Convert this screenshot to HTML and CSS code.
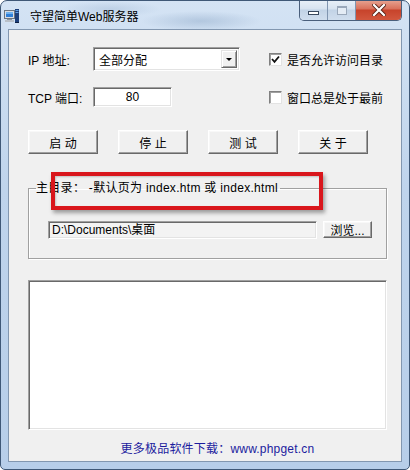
FILE: index.html
```html
<!DOCTYPE html>
<html lang="zh-CN">
<head>
    <meta charset="UTF-8">
    <meta name="viewport" content="width=device-width, initial-scale=1.0">
    <title>守望简单Web服务器</title>
    <link rel="stylesheet" href="styles.css">
</head>
<body>
    <div class="window">
        <div class="titlebar">
            <svg class="app-icon" width="16" height="16" viewBox="0 0 16 16">
                <rect x="0.5" y="2.5" width="10" height="8" fill="#d8dde4" stroke="#6b7480"/>
                <rect x="2" y="4" width="7" height="5" fill="#2f7fd8"/>
                <rect x="2" y="4" width="7" height="2" fill="#6fb2f0"/>
                <rect x="3" y="11" width="5" height="1" fill="#8a929c"/>
                <rect x="1" y="12" width="9" height="2" fill="#b9c0c8"/>
                <rect x="11" y="1" width="4" height="13" fill="#1d3f7a"/>
                <rect x="11.5" y="2" width="3" height="1" fill="#5fa0e8"/>
                <rect x="11.5" y="4" width="3" height="1" fill="#5fa0e8"/>
                <rect x="11" y="14" width="4" height="1" fill="#0c1f40"/>
            </svg>
            <span class="title">守望简单Web服务器</span>
            <div class="caption-buttons">
                <div class="cap-btn cap-min"><span class="min-glyph"></span></div>
                <div class="cap-btn cap-max"><span class="max-glyph"></span></div>
                <div class="cap-btn cap-close">
                    <svg width="14" height="12" viewBox="0 0 14 12">
                        <path d="M2 1 L12 11 M12 1 L2 11" stroke="#5a2418" stroke-width="4" stroke-linecap="square"/>
                        <path d="M2 1 L12 11 M12 1 L2 11" stroke="#ffffff" stroke-width="2.2" stroke-linecap="square"/>
                    </svg>
                </div>
            </div>
        </div>

        <div class="client">
            <div class="settings">
                <span class="field-label">IP 地址:</span>
                <div class="combo">
                    <span class="combo-text">全部分配</span>
                    <span class="combo-arrow"><span class="arrow-down"></span></span>
                </div>
                <span></span>
                <label class="check">
                    <span class="check-box">
                        <svg width="9" height="9" viewBox="0 0 9 9">
                            <path d="M1 4 L3.5 6.8 L8 1.5" fill="none" stroke="#111" stroke-width="1.8"/>
                        </svg>
                    </span>
                    是否允许访问目录
                </label>

                <span class="field-label">TCP 端口:</span>
                <div class="port-input">80</div>
                <span></span>
                <label class="check">
                    <span class="check-box"></span>
                    窗口总是处于最前
                </label>
            </div>

            <div class="actions">
                <div class="btn">启 动</div>
                <div class="btn">停 止</div>
                <div class="btn">测 试</div>
                <div class="btn">关 于</div>
            </div>

            <fieldset class="dir-group">
                <legend>主目录： -默认页为 index.htm 或 index.html</legend>
                <div class="dir-row">
                    <div class="dir-input">D:\Documents\桌面</div>
                    <div class="btn btn-small">浏览...</div>
                </div>
            </fieldset>

            <div class="log-box"></div>

            <div class="footer">更多极品软件下载：www.phpget.cn</div>
        </div>

        <!-- annotation from the screenshot -->
        <div class="highlight"></div>
    </div>
</body>
</html>
```

FILE: styles.css
```css
body {
    margin: 0;
    background: #ffffff;
    font-family: "Liberation Sans", "Noto Sans CJK SC", sans-serif;
    font-size: 12px;
    color: #000;
}

.window {
    position: relative;
    width: 410px;
    height: 470px;
    box-sizing: border-box;
    border: 1px solid #3f5877;
    border-radius: 7px 7px 5px 5px;
    background:
        radial-gradient(ellipse 60px 10px at 200px 20px, rgba(120,150,185,0.35), transparent),
        radial-gradient(ellipse 50px 8px at 110px 8px, rgba(150,175,205,0.35), transparent),
        linear-gradient(180deg, #d4e3f4 0%, #bfd4ec 40%, #b7cee9 100%);
    display: flex;
    flex-direction: column;
    overflow: hidden;
}

.titlebar {
    height: 28px;
    display: flex;
    align-items: center;
    padding-left: 3px;
}

.app-icon {
    margin-top: 1px;
}

.title {
    margin-left: 10px;
    margin-top: 1px;
    font-size: 12px;
    color: #000;
}

.caption-buttons {
    margin-left: auto;
    margin-right: 7px;
    align-self: flex-start;
    margin-top: -1px;
    display: flex;
    height: 20px;
    border: 1px solid #4a5f7c;
    border-top: none;
    border-radius: 0 0 5px 5px;
    overflow: hidden;
}

.cap-btn {
    display: flex;
    align-items: center;
    justify-content: center;
    height: 20px;
}

.cap-min,
.cap-max {
    width: 27px;
    background: linear-gradient(180deg, #e9f0f8 0%, #d7e3f0 45%, #c2d3e6 50%, #d0deee 100%);
    border-right: 1px solid #8095b0;
}

.min-glyph {
    width: 9px;
    height: 2px;
    margin-top: 6px;
    background: #fff;
    border: 1px solid #39495e;
}

.max-glyph {
    width: 8px;
    height: 6px;
    border: 1px solid #9aa8ba;
    border-top-width: 2px;
    background: #e4ecf5;
}

.cap-close {
    width: 45px;
    background: linear-gradient(180deg, #e8a593 0%, #d9705a 45%, #c7432b 50%, #d2573e 100%);
}

.client {
    flex: 1;
    margin: 0 7px 7px 7px;
    background: #f0f0f0;
    border: 1px solid #8297b0;
    padding: 17px 14px 0 19px;
    display: flex;
    flex-direction: column;
}

.settings {
    display: grid;
    grid-template-columns: 65px 147px 29px 1fr;
    grid-template-rows: 24px 20px;
    row-gap: 16px;
    align-items: center;
}

.field-label {
    white-space: nowrap;
}

.combo {
    height: 24px;
    box-sizing: border-box;
    display: flex;
    align-items: center;
    background: #fff;
    border: 1px solid;
    border-color: #a0a0a0 #ffffff #ffffff #a0a0a0;
    box-shadow: inset 1px 1px 0 #696969, inset -1px -1px 0 #e3e3e3;
    padding: 2px;
}

.combo-text {
    flex: 1;
    padding-left: 3px;
}

.combo-arrow {
    width: 16px;
    height: 18px;
    box-sizing: border-box;
    display: flex;
    align-items: center;
    justify-content: center;
    background: #f0f0f0;
    border: 1px solid;
    border-color: #e3e3e3 #696969 #696969 #e3e3e3;
    box-shadow: inset 1px 1px 0 #fff, inset -1px -1px 0 #a0a0a0;
}

.arrow-down {
    width: 0;
    height: 0;
    border-left: 3px solid transparent;
    border-right: 3px solid transparent;
    border-top: 3px solid #000;
    margin-top: 1px;
}

.port-input {
    width: 79px;
    height: 20px;
    box-sizing: border-box;
    background: #fff;
    border: 1px solid;
    border-color: #a0a0a0 #ffffff #ffffff #a0a0a0;
    box-shadow: inset 1px 1px 0 #696969, inset -1px -1px 0 #e3e3e3;
    text-align: center;
    line-height: 18px;
}

.check {
    display: flex;
    align-items: center;
    gap: 5px;
    white-space: nowrap;
}

.check-box {
    width: 13px;
    height: 13px;
    box-sizing: border-box;
    background: #fff;
    border: 1px solid;
    border-color: #808080 #e3e3e3 #e3e3e3 #808080;
    box-shadow: inset 1px 1px 0 #a0a0a0;
    display: flex;
    align-items: center;
    justify-content: center;
}

.actions {
    margin-top: 23px;
    display: flex;
    gap: 20px;
}

.btn {
    width: 70px;
    height: 24px;
    box-sizing: border-box;
    background: #f0f0f0;
    border: 1px solid;
    border-color: #ffffff #696969 #696969 #ffffff;
    box-shadow: inset -1px -1px 0 #a0a0a0, inset 1px 1px 0 #f8f8f8;
    display: flex;
    align-items: center;
    justify-content: center;
}

.btn-small {
    width: 49px;
    height: 17px;
}

.dir-group {
    margin: 26px 0 0 0;
    width: 359px;
    box-sizing: border-box;
    padding: 25px 0 19px 19px;
    border: 1px solid #a0a0a0;
    box-shadow: 1px 1px 0 #fff, inset 1px 1px 0 #fff;
    min-width: 0;
}

.dir-group legend {
    margin-left: -12px;
    padding: 0 2px 0 0;
    line-height: 16px;
    font-size: 12px;
    letter-spacing: 0.3px;
}

.dir-row {
    display: flex;
    align-items: flex-start;
    gap: 6px;
}

.dir-input {
    width: 269px;
    height: 18px;
    box-sizing: border-box;
    background: #f3f3f3;
    border: 1px solid;
    border-color: #a0a0a0 #ffffff #ffffff #a0a0a0;
    box-shadow: inset 1px 1px 0 #696969, inset -1px -1px 0 #e3e3e3;
    padding-left: 3px;
    line-height: 16px;
    white-space: nowrap;
}

.log-box {
    margin-top: 21px;
    width: 359px;
    height: 150px;
    box-sizing: border-box;
    background: #fff;
    border: 1px solid;
    border-color: #a0a0a0 #ffffff #ffffff #a0a0a0;
    box-shadow: inset 1px 1px 0 #696969, inset -1px -1px 0 #e3e3e3;
}

.footer {
    margin-top: 11px;
    line-height: 16px;
    text-align: center;
    padding-left: 20px;
    color: #1c1c9e;
    letter-spacing: 0.2px;
}

.highlight {
    position: absolute;
    left: 50px;
    top: 171px;
    width: 272px;
    height: 38px;
    box-sizing: border-box;
    border: 4px solid #d9161c;
    box-shadow: 2px 3px 4px rgba(0, 0, 0, 0.35), inset 1px 1px 2px rgba(0, 0, 0, 0.2);
}
```
